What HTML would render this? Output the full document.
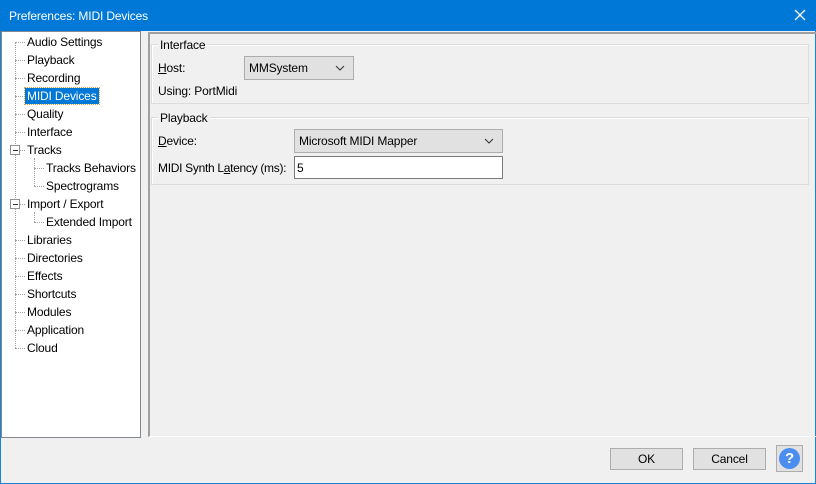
<!DOCTYPE html><html><head><style>
body{margin:0;width:816px;height:484px;overflow:hidden;background:#f0f0f0;font-family:"Liberation Sans",sans-serif;font-size:12px;letter-spacing:-0.15px;color:#000;position:relative}
.win{position:absolute;left:0;top:0;width:814px;height:482px;border:1px solid #1883d7}
.title{position:absolute;left:0;top:0;width:816px;height:31px;background:#0078d7;color:#fff}
.title span{position:absolute;left:9px;top:9px;font-size:12px}
.a{position:absolute;white-space:nowrap}
.tree{position:absolute;left:1px;top:31px;width:138px;height:405px;background:#fff;border:1px solid #828790}
.dv{position:absolute;border-left:1px dotted #a0a0a0;width:0}
.dh{position:absolute;border-top:1px dotted #a0a0a0;height:0}
.box{position:absolute;width:8px;height:8px;border:1px solid #919191;background:#fff}
.box:after{content:"";position:absolute;left:2px;top:4px;width:5px;border-top:1px solid #333}
.panel{position:absolute;left:148px;top:32px;width:666px;height:402px;border-left:2px solid #a0a0a0;border-top:2px solid #a0a0a0;border-right:1px solid #fff;border-bottom:1px solid #fff}
.grp{position:absolute;border:1px solid #dcdcdc;box-shadow:inset 1px 1px #fff}
.leg{position:absolute;background:#f0f0f0;padding:0 2px}
.sel{position:absolute;border:1px solid #adadad;background:#e1e1e1;height:22px}
.sel svg{position:absolute;right:8px;top:8px}
.btn{position:absolute;border:1px solid #adadad;background:#e1e1e1;height:20px;text-align:center;line-height:20px}
</style></head><body>
<div class="win"></div>
<div class="title"><span>Preferences: MIDI Devices</span>
<svg style="position:absolute;left:794px;top:9px" width="12" height="12"><path d="M1 1L11 11M11 1L1 11" stroke="#fff" stroke-width="1.3"/></svg></div>
<div class="tree">
<div class="dv" style="left:13px;top:10px;height:306px"></div>
<div class="dv" style="left:32px;top:126px;height:28px"></div>
<div class="dv" style="left:32px;top:180px;height:10px"></div>
</div>
<div style="position:absolute;left:2px;top:32px">
<div class="dh" style="left:13px;top:10px;width:10px"></div>
<div class="dh" style="left:13px;top:28px;width:10px"></div>
<div class="dh" style="left:13px;top:46px;width:10px"></div>
<div class="dh" style="left:13px;top:64px;width:10px"></div>
<div class="dh" style="left:13px;top:82px;width:10px"></div>
<div class="dh" style="left:13px;top:100px;width:10px"></div>
<div class="dh" style="left:18px;top:118px;width:5px"></div>
<div class="dh" style="left:32px;top:136px;width:10px"></div>
<div class="dh" style="left:32px;top:154px;width:10px"></div>
<div class="dh" style="left:18px;top:172px;width:5px"></div>
<div class="dh" style="left:32px;top:190px;width:10px"></div>
<div class="dh" style="left:13px;top:208px;width:10px"></div>
<div class="dh" style="left:13px;top:226px;width:10px"></div>
<div class="dh" style="left:13px;top:244px;width:10px"></div>
<div class="dh" style="left:13px;top:262px;width:10px"></div>
<div class="dh" style="left:13px;top:280px;width:10px"></div>
<div class="dh" style="left:13px;top:298px;width:10px"></div>
<div class="dh" style="left:13px;top:316px;width:10px"></div>
<div class="box" style="left:8px;top:113px"></div>
<div class="box" style="left:8px;top:167px"></div>
</div>
<div class="a" style="left:27px;top:35px">Audio Settings</div>
<div class="a" style="left:27px;top:53px">Playback</div>
<div class="a" style="left:27px;top:71px">Recording</div>
<div class="a" style="left:25px;top:88px;background:#0078d7;color:#fff;padding:1px 2px;outline:1px dotted #e0a040">MIDI Devices</div>
<div class="a" style="left:27px;top:107px">Quality</div>
<div class="a" style="left:27px;top:125px">Interface</div>
<div class="a" style="left:27px;top:143px">Tracks</div>
<div class="a" style="left:46px;top:161px">Tracks Behaviors</div>
<div class="a" style="left:46px;top:179px">Spectrograms</div>
<div class="a" style="left:27px;top:197px">Import / Export</div>
<div class="a" style="left:46px;top:215px">Extended Import</div>
<div class="a" style="left:27px;top:233px">Libraries</div>
<div class="a" style="left:27px;top:251px">Directories</div>
<div class="a" style="left:27px;top:269px">Effects</div>
<div class="a" style="left:27px;top:287px">Shortcuts</div>
<div class="a" style="left:27px;top:305px">Modules</div>
<div class="a" style="left:27px;top:323px">Application</div>
<div class="a" style="left:27px;top:341px">Cloud</div>
<div class="panel"></div>
<div class="grp" style="left:151px;top:44px;width:656px;height:58px"></div>
<div class="leg a" style="left:158px;top:38px">Interface</div>
<div class="a" style="left:158px;top:61px"><u>H</u>ost:</div>
<div class="sel" style="left:244px;top:56px;width:108px"><span class="a" style="left:4px;top:4px">MMSystem</span><svg width="10" height="6"><path d="M1 1L5 5L9 1" stroke="#333" fill="none"/></svg></div>
<div class="a" style="left:158px;top:84px">Using: PortMidi</div>
<div class="grp" style="left:151px;top:117px;width:656px;height:66px"></div>
<div class="leg a" style="left:158px;top:111px">Playback</div>
<div class="a" style="left:158px;top:134px"><u>D</u>evice:</div>
<div class="sel" style="left:294px;top:129px;width:207px"><span class="a" style="left:4px;top:4px">Microsoft MIDI Mapper</span><svg width="10" height="6"><path d="M1 1L5 5L9 1" stroke="#333" fill="none"/></svg></div>
<div class="a" style="left:158px;top:161px;letter-spacing:-0.3px">MIDI Synth L<u>a</u>tency (ms):</div>
<div style="position:absolute;left:294px;top:156px;width:207px;height:21px;background:#fff;border:1px solid #7a7a7a"><span class="a" style="left:2px;top:4px">5</span></div>
<div class="btn" style="left:610px;top:448px;width:71px">OK</div>
<div class="btn" style="left:693px;top:448px;width:71px">Cancel</div>
<div style="position:absolute;left:776px;top:445px;width:25px;height:25px;border:1px solid #adadad;background:#e1e1e1"><div style="position:absolute;left:2px;top:2px;width:21px;height:21px;border-radius:50%;background:#4b8ef0;color:#fff;font-weight:bold;font-size:15px;text-align:center;line-height:21px">?</div></div>
</body></html>
